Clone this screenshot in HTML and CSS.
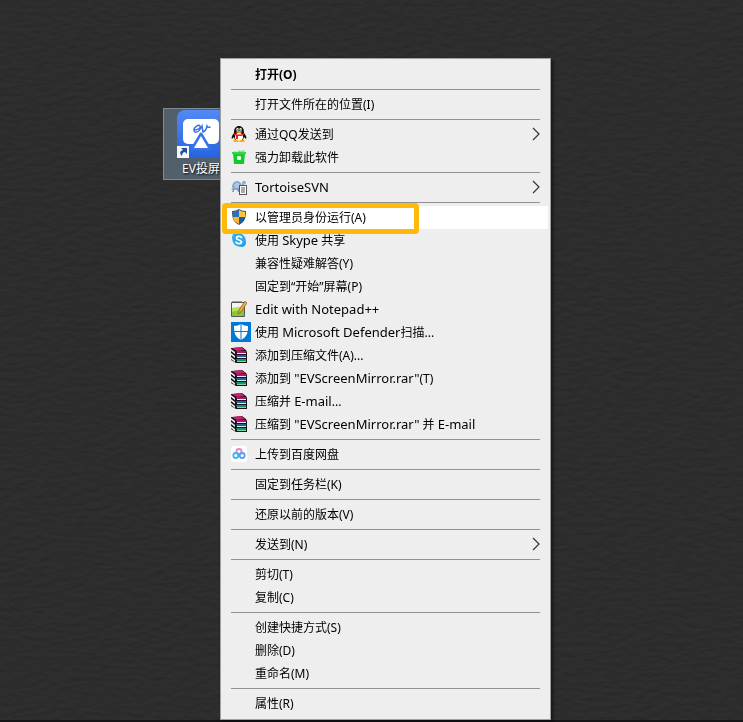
FILE: index.html
```
<!DOCTYPE html>
<html lang="zh-CN">
<head>
    <meta charset="UTF-8">
    <meta name="viewport" content="width=device-width, initial-scale=1.0">
    <title>EV投屏 右键菜单</title>
    <link rel="stylesheet" href="styles.css">
</head>
<body>
    <!-- 共用图标 -->
    <svg class="defs" width="0" height="0" aria-hidden="true">
        <symbol id="rar" viewBox="0 0 16 16">
            <path d="M0 1h2l9-1 4 3 1 2v11H5l-5-3z" fill="#1a1218"/>
            <path d="M1 1l9-1 4 3-8 1z" fill="#c4246c"/>
            <path d="M5 4h10v2H6z" fill="#b01560"/>
            <path d="M6 6h9v1H6z" fill="#f3e9ee"/>
            <path d="M5 8h10v2H6z" fill="#1d62a6"/>
            <path d="M6 10h9v1H6z" fill="#d8ecf5"/>
            <path d="M5 12h10v2H6z" fill="#0f9a63"/>
            <path d="M6 14h9v1H6z" fill="#7fd3ac"/>
            <path d="M0 2l4 3v2L0 4zM0 6l4 3v2L0 8zM0 10l4 3v2l-4-3z" fill="#eee"/>
        </symbol>
        <symbol id="arrow" viewBox="0 0 8 14">
            <path d="M1 1l6 6-6 6" fill="none" stroke="#333344" stroke-width="1.2"/>
        </symbol>
    </svg>

    <!-- 桌面背景纹理 -->
    <svg class="wallpaper" aria-hidden="true">
        <filter id="leather" x="0" y="0" width="100%" height="100%" color-interpolation-filters="sRGB">
            <feTurbulence type="fractalNoise" baseFrequency=".09 .2" numOctaves="4" seed="11" result="n"/>
            <feDiffuseLighting in="n" surfaceScale="0.5" diffuseConstant="1" lighting-color="#323232">
                <feDistantLight azimuth="260" elevation="64"/>
            </feDiffuseLighting>
        </filter>
        <rect width="100%" height="100%" filter="url(#leather)"/>
    </svg>

    <main class="desktop">
        <a class="shortcut" href="#">
            <svg width="48" height="48" viewBox="0 0 48 48">
                <defs>
                    <linearGradient id="tile" x1="0" y1="0" x2="0" y2="1">
                        <stop offset="0" stop-color="#5289f3"/>
                        <stop offset="1" stop-color="#2663df"/>
                    </linearGradient>
                </defs>
                <rect width="48" height="48" rx="8" fill="url(#tile)"/>
                <rect x="6" y="9" width="36" height="25" rx="5" fill="#fff"/>
                <path d="M24 24l9 15H15z" fill="#3973e8" stroke="#3973e8" stroke-width="3" stroke-linejoin="round"/>
                <path d="M24 26l7 12H17z" fill="#fff"/>
                <path d="M17 20c4 0 7-2 6-4s-6 1-6 4 4 4 8-4l1 6c3-1 4-6 4-6s1 2 3 1" fill="none" stroke="#3a72e6" stroke-width="1.5" stroke-linecap="round"/>
                <path d="M0 36h12v12H0z" fill="#f4f6fa"/>
                <path d="M4 38h6v6l-2-2c-2 0-3 2-3 4-3-3-2-5 1-6z" fill="#24519f"/>
            </svg>
            <span>EV投屏</span>
        </a>

        <ul class="menu">
            <li><button class="default">打开(O)</button></li>
            <li class="line"></li>
            <li><button>打开文件所在的位置(I)</button></li>
            <li class="line"></li>
            <li>
                <button>
                    <svg class="icon" viewBox="0 0 16 16">
                        <path d="M3 7C3 2 5 0 8 0s5 2 5 7c2 2 3 5 2 6l-2-2-1 3H4l-1-3-2 2C0 12 1 9 3 7z" fill="#111"/>
                        <ellipse cx="8" cy="11" rx="4" ry="4" fill="#fff"/>
                        <ellipse cx="6.5" cy="3.5" rx="1.2" ry="1.7" fill="#fff"/>
                        <ellipse cx="9.5" cy="3.5" rx="1.2" ry="1.7" fill="#fff"/>
                        <circle cx="6.8" cy="3.8" r=".6"/><circle cx="9.2" cy="3.8" r=".6"/>
                        <ellipse cx="8" cy="6" rx="3" ry="1" fill="#f6a70a"/>
                        <path d="M3 7c3 2 7 2 10 0v2c-2 1-4 1-6 1v3H5V9L3 9z" fill="#e0201b"/>
                        <ellipse cx="5" cy="15" rx="3" ry="1" fill="#f6a70a"/>
                        <ellipse cx="11" cy="15" rx="3" ry="1" fill="#f6a70a"/>
                    </svg>
                    通过QQ发送到
                    <svg class="arrow"><use href="#arrow"/></svg>
                </button>
            </li>
            <li>
                <button>
                    <svg class="icon" viewBox="0 0 16 16">
                        <path d="M3 2l3 1 2-2 2 1 3-1 1 3H2z" fill="#8de08f"/>
                        <path d="M2 4h12l-1 11H3z" fill="#16c82b"/>
                        <path d="M1 3h14v2H1z" fill="#35d645"/>
                        <rect x="6" y="7" width="4" height="4" rx="1" fill="#eaffea"/>
                    </svg>
                    强力卸载此软件
                </button>
            </li>
            <li class="line"></li>
            <li>
                <button>
                    <svg class="icon" viewBox="0 0 16 16">
                        <path d="M1 8c0-4 3-6 5-6s5 2 5 6l-2 3H3z" fill="#8aa6cf"/>
                        <path d="M3 6l3-3 3 3-2 3H4z" fill="#b3c6e3"/>
                        <path d="M0 10l3-1v4H1l1-2zM6 10h3v3H7z" fill="#7893bb"/>
                        <path d="M11 4c0-3 4-3 4 0l-2 2h-2z" fill="#96add0"/>
                        <rect x="8.5" y="6.5" width="7" height="9" fill="#fff" stroke="#555"/>
                        <path d="M10 9h4M10 11h4M10 13h4" stroke="#555"/>
                    </svg>
                    <span class="latin">TortoiseSVN</span>
                    <svg class="arrow"><use href="#arrow"/></svg>
                </button>
            </li>
            <li class="line"></li>
            <li class="marked">
                <button class="active">
                    <svg class="icon" viewBox="0 0 16 16">
                        <path d="M8 0c2 1 4 2 7 2 0 7-1 11-7 14C2 13 1 9 1 2c3 0 5-1 7-2z" fill="#4d5966"/>
                        <path d="M8 1v7H2V3c2 0 4-1 6-2z" fill="#2b72bd"/>
                        <path d="M8 1v7h6V3c-2 0-4-1-6-2z" fill="#f9c440"/>
                        <path d="M2 8h6v7c-4-2-6-4-6-7z" fill="#f9b82e"/>
                        <path d="M14 8H8v7c4-2 6-4 6-7z" fill="#1e5ba6"/>
                    </svg>
                    以管理员身份运行(A)
                </button>
            </li>
            <li>
                <button>
                    <svg class="icon" viewBox="0 0 16 16">
                        <circle cx="5.5" cy="5.5" r="4.5" fill="#35b3ea"/>
                        <circle cx="10.5" cy="10.5" r="4.5" fill="#1f9be0"/>
                        <circle cx="8" cy="8" r="6.5" fill="#29a9e8"/>
                        <path d="M10.500 5.500C9.500 4 5.500 4 5.500 6.200 5.500 8.500 10.500 7.500 10.500 10c0 2-4.500 2.200-5.500.2" fill="none" stroke="#fff" stroke-width="1.8" stroke-linecap="round"/>
                    </svg>
                    <span>使用 <span class="latin">Skype</span> 共享</span>
                </button>
            </li>
            <li><button>兼容性疑难解答(Y)</button></li>
            <li><button>固定到“开始”屏幕(P)</button></li>
            <li>
                <button>
                    <svg class="icon" viewBox="0 0 16 16">
                        <path d="M.5 1.500h13v14H.5z" fill="#f5f7ee" stroke="#55584f"/>
                        <path d="M1 7l12-2v10H1z" fill="#b8df5d"/>
                        <path d="M1 11l12-3v7H1z" fill="#84c832"/>
                        <path d="M2 0v2M4 0v2M6 0v2M8 0v2M10 0v2" stroke="#555"/>
                        <path d="M14 0l2 2-6 9-3 2 1-4z" fill="#f0a63c" stroke="#7a4b1c" stroke-width=".6"/>
                    </svg>
                    <span class="latin">Edit with Notepad++</span>
                </button>
            </li>
            <li>
                <button>
                    <svg class="icon large" viewBox="0 0 20 20">
                        <path d="M0 0h20v20H0z" fill="#0078d7"/>
                        <path d="M10 2c2 1 4 2 7 2 0 7-1 11-7 14C4 15 3 11 3 4c3 0 5-1 7-2z" fill="#fff"/>
                        <path d="M10 2v16M3 9.500h14" stroke="#0078d7"/>
                    </svg>
                    <span>使用 <span class="latin">Microsoft Defender</span>扫描...</span>
                </button>
            </li>
            <li><button><svg class="icon"><use href="#rar"/></svg>添加到压缩文件(A)...</button></li>
            <li><button><svg class="icon"><use href="#rar"/></svg><span>添加到 <span class="latin">"EVScreenMirror.rar"</span>(T)</span></button></li>
            <li><button><svg class="icon"><use href="#rar"/></svg><span>压缩并 <span class="latin">E-mail</span>...</span></button></li>
            <li><button><svg class="icon"><use href="#rar"/></svg><span>压缩到 <span class="latin">"EVScreenMirror.rar"</span> 并 <span class="latin">E-mail</span></span></button></li>
            <li class="line"></li>
            <li>
                <button>
                    <svg class="icon" viewBox="0 0 16 16">
                        <rect width="16" height="16" rx="3" fill="#fff"/>
                        <g fill="none" stroke-width="1.8">
                            <circle cx="8" cy="5.500" r="2.500" stroke="#e486c0"/>
                            <circle cx="4.800" cy="9.500" r="2.500" stroke="#3fb5f0"/>
                            <circle cx="11.200" cy="9.500" r="2.500" stroke="#5a9df0"/>
                        </g>
                    </svg>
                    上传到百度网盘
                </button>
            </li>
            <li class="line"></li>
            <li><button>固定到任务栏(K)</button></li>
            <li class="line"></li>
            <li><button>还原以前的版本(V)</button></li>
            <li class="line"></li>
            <li><button>发送到(N)<svg class="arrow"><use href="#arrow"/></svg></button></li>
            <li class="line"></li>
            <li><button>剪切(T)</button></li>
            <li><button>复制(C)</button></li>
            <li class="line"></li>
            <li><button>创建快捷方式(S)</button></li>
            <li><button>删除(D)</button></li>
            <li><button>重命名(M)</button></li>
            <li class="line"></li>
            <li><button>属性(R)</button></li>
        </ul>
    </main>
</body>
</html>
```
FILE: styles.css
```
* {
    box-sizing: border-box;
}
body {
    margin: 0;
    background-color: #2d2d2d;
    font-family: "Noto Sans", "Noto Sans CJK SC", sans-serif;
    font-size: 12px;
    color: #000;
}
.defs {
    position: absolute;
}
.wallpaper {
    position: fixed;
    inset: 0;
    width: 100%;
    height: 100%;
}
.desktop {
    position: relative;
    min-height: 100vh;
    border-bottom: 2px solid #151519;
}

/* 桌面图标 */
.shortcut {
    position: absolute;
    left: 163px;
    top: 108px;
    width: 76px;
    height: 72px;
    padding-top: 1px;
    display: flex;
    flex-direction: column;
    align-items: center;
    background-color: #52606c;
    border: 1px solid #7e8b96;
    color: #fff;
    text-decoration: none;
    text-shadow: 1px 1px 2px #000;
}
.shortcut span {
    line-height: 20px;
    margin-top: 1px;
}

/* 右键菜单 */
.menu {
    position: absolute;
    left: 220px;
    top: 58px;
    min-width: 331px;
    margin: 0;
    padding: 4px 2px;
    list-style: none;
    background-color: #eee;
    border: 1px solid #a0a0a0;
    box-shadow: 2px 2px 3px rgba(0, 0, 0, 0.5);
}
.menu button {
    display: flex;
    align-items: center;
    width: 100%;
    height: 23px;
    padding: 0 8px 2px 32px;
    border: none;
    background: none;
    color: inherit;
    font: inherit;
    text-align: left;
}
.menu button:hover,
.menu button.active {
    background-color: #fff;
}
.menu .default {
    font-weight: bold;
}
.latin {
    font-size: 13px;
}
.line {
    height: 1px;
    margin: 3px 8px;
    background-color: #919191;
}
.icon {
    flex: none;
    width: 16px;
    height: 16px;
    margin-left: -24px;
    margin-right: 8px;
}
.icon.large {
    width: 20px;
    height: 20px;
    margin-right: 4px;
}
.arrow {
    width: 8px;
    height: 14px;
    margin-left: auto;
}

/* 黄色标注框 */
.marked {
    position: relative;
}
.marked::after {
    content: "";
    position: absolute;
    left: -1px;
    top: -3px;
    box-sizing: border-box;
    width: 197px;
    height: 31px;
    border: 5px solid #ffb90a;
    border-radius: 4px;
    z-index: 1;
    pointer-events: none;
}
```
